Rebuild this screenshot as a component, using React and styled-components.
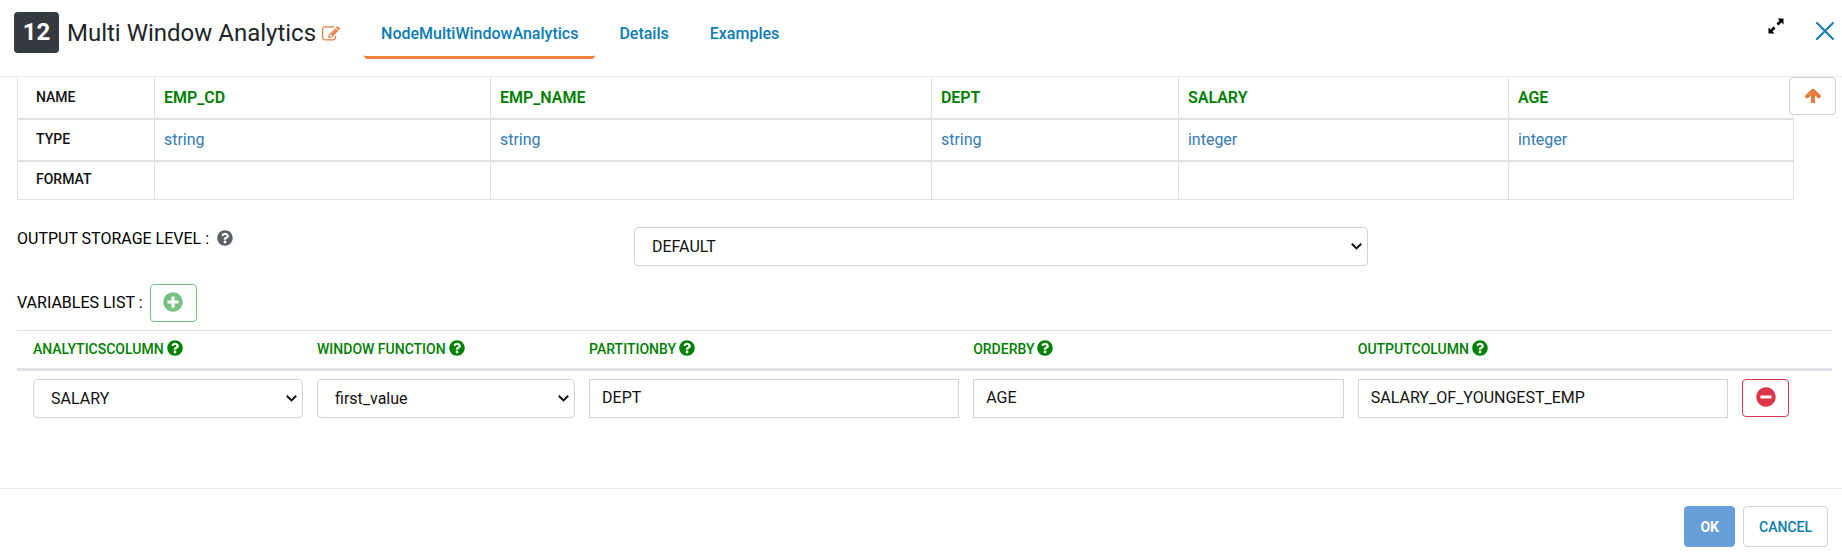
import React from "react";
import styled, { createGlobalStyle } from "styled-components";
import { FaQuestionCircle, FaPlusCircle, FaMinusCircle } from "react-icons/fa";

const GlobalStyle = createGlobalStyle`
  * { box-sizing: border-box; }
  body {
    margin: 0;
    background: #fff;
    color: #111;
    font-family: Roboto, "Liberation Sans", sans-serif;
    font-size: 16px;
    line-height: 24px;
  }
  button, input, select { font: inherit; color: inherit; }
`;

const Dialog = styled.main`
  display: flex;
  flex-direction: column;
  min-height: 100vh;
`;

const Header = styled.header`
  display: flex;
  align-items: flex-start;
  padding: 12px 8px 17px 14px;
  border-bottom: 1px solid #e9ecef;
`;

const Badge = styled.span`
  padding: 8px;
  width: 45px;
  border-radius: 4px;
  background: #343a40;
  color: #fff;
  font-size: 24px;
  font-weight: 700;
  line-height: 25px;
  text-align: center;
`;

const Title = styled.h1`
  margin: 5px 6px 0 8px;
  color: #212529;
  font-size: 24px;
  font-weight: 400;
  line-height: 32px;
  white-space: nowrap;
`;

const IconButton = styled.button`
  display: inline-flex;
  align-items: center;
  justify-content: center;
  margin-top: ${(p) => p.$top || 0}px;
  padding: 0;
  border: 0;
  background: none;
  color: ${(p) => p.$color};
  cursor: pointer;
`;

const Tabs = styled.nav`
  display: flex;
  gap: 7px;
  margin-left: 24px;
`;

const Tab = styled.a`
  padding: 10px 17px;
  border-bottom: 3px solid ${(p) => (p.$active ? "#f5803e" : "transparent")};
  border-radius: 4px;
  color: #0a7cb4;
  font-weight: 500;
  text-decoration: none;
`;

const WindowActions = styled.div`
  display: flex;
  gap: 32px;
  margin-left: auto;
`;

const Body = styled.div`
  position: relative;
  flex: 1;
  padding: 0 10px 0 17px;
`;

const SchemaTable = styled.table`
  width: calc(100% - 38px);
  border-collapse: collapse;
  table-layout: fixed;
`;

const SchemaRow = styled.tr`
  height: ${(p) => p.$height}px;
  & + & { border-top: 2px solid #dee2e6; }
`;

const cellBorder = "1px solid #dee2e6";

const RowHead = styled.th`
  padding: 0 18px 2px;
  border: ${cellBorder};
  border-top-width: inherit;
  font-size: 14px;
  font-weight: 500;
  text-align: left;
`;

const Cell = styled.td`
  padding: 0 9px;
  border: ${cellBorder};
  border-top-width: inherit;
  color: ${(p) => (p.$name ? "#008000" : "#337ab7")};
  font-weight: ${(p) => (p.$name ? 600 : 400)};
`;

const OutlineButton = styled.button`
  display: inline-flex;
  align-items: center;
  justify-content: center;
  width: 47px;
  height: 38px;
  padding: 0 0 2px;
  border: 1px solid ${(p) => p.$border || p.$color};
  border-radius: 4px;
  background: #fff;
  color: ${(p) => p.$color};
  cursor: pointer;
`;

const ScrollTop = styled(OutlineButton)`
  position: absolute;
  top: 0;
  right: 6px;
`;

const StorageRow = styled.div`
  display: grid;
  grid-template-columns: 617fr 734fr 464fr;
  margin-top: 27px;
`;

const FieldLabel = styled.label`
  display: flex;
  align-items: center;
  gap: 8px;
  height: 24px;
  color: #000;

  svg { margin-bottom: 2px; }
`;

const SelectBox = styled.div`
  display: grid;
  grid-template-areas: "field";
  align-items: center;

  > * { grid-area: field; }
  > svg {
    justify-self: end;
    margin-right: 6px;
    pointer-events: none;
  }
`;

const SelectField = styled.select`
  width: 100%;
  height: 39px;
  padding: 7px 24px 5px 17px;
  border: 1px solid #ced4da;
  border-radius: 4px;
  background: #fff;
  appearance: none;
`;

const TextInput = styled.input`
  display: block;
  width: 100%;
  height: 39px;
  padding: 4px 12px 6px;
  border: 1px solid #ced4da;
  border-radius: 0;
  background: #fff;
`;

const ListHeading = styled.div`
  display: flex;
  align-items: center;
  gap: 7px;
  margin-top: 18px;
  color: #000;
`;

const VariablesTable = styled.table`
  width: 100%;
  margin-top: 8px;
  border-collapse: separate;
  border-spacing: 0;
  border-top: 1px solid #dee2e6;
  table-layout: fixed;

  th, td { padding: 0 0 0 14px; text-align: left; vertical-align: top; }
  th:first-child, td:first-child { padding-left: 16px; }
  th { height: 40px; border-bottom: 3px solid #dee2e6; }
  td { padding-top: 8px; }
`;

const ColumnTitle = styled.span`
  display: flex;
  align-items: center;
  gap: 3px;
  padding-top: 6px;
  color: #008000;
  font-size: 14px;
  font-weight: 500;

  svg { margin-bottom: 2px; }
`;

const Footer = styled.footer`
  display: flex;
  justify-content: flex-end;
  gap: 8px;
  padding: 17px 14px 8px;
  border-top: 1px solid #e9ecef;
`;

const FooterButton = styled.button`
  height: 41px;
  padding: 0 15px;
  border: 1px solid ${(p) => (p.$primary ? "#689ed9" : "#ced4da")};
  border-radius: 4px;
  background: ${(p) => (p.$primary ? "#689ed9" : "#fff")};
  color: ${(p) => (p.$primary ? "#fff" : "#0a7cb4")};
  font-size: 14px;
  font-weight: ${(p) => (p.$primary ? 700 : 500)};
  cursor: pointer;
`;

const EditIcon = () => (
  <svg width="18" height="18" viewBox="0 0 1792 1792" fill="currentColor" aria-hidden="true">
    <path d="M888 1184l116-116-152-152-116 116v56h96v96h56zm440-720q-16-16-33 1l-350 350q-17 17-1 33t33-1l350-350q17-17 1-33zm80 594v190q0 119-84.5 203.5t-203.5 84.5h-832q-119 0-203.5-84.5t-84.5-203.5v-832q0-119 84.5-203.5t203.5-84.5h832q63 0 117 25 15 7 18 23 3 17-9 29l-49 49q-14 14-32 8-23-6-45-6h-832q-66 0-113 47t-47 113v832q0 66 47 113t113 47h832q66 0 113-47t47-113v-126q0-13 9-22l64-64q15-15 35-7t20 29zm-96-738l288 288-672 672h-288v-288zm444 132l-92 92-288-288 92-92q28-28 68-28t68 28l152 152q28 28 28 68t-28 68z" />
  </svg>
);

const ExpandIcon = () => (
  <svg width="16" height="16" viewBox="0 0 16 16" aria-hidden="true">
    <path d="M9.5 0.5H15.5V6.5L13.5 4.5L10.5 7.5L8.5 5.5L11.5 2.5ZM6.5 15.5H0.5V9.5L2.5 11.5L5.5 8.5L7.5 10.5L4.5 13.5Z" fill="currentColor" />
  </svg>
);

const CloseIcon = () => (
  <svg width="18" height="18" viewBox="0 0 18 18" aria-hidden="true">
    <path d="M1 1L17 17M17 1L1 17" stroke="currentColor" strokeWidth="2" strokeLinecap="round" />
  </svg>
);

const ArrowUpIcon = () => (
  <svg width="16" height="15" viewBox="0 0 16 15" fill="none" stroke="currentColor" strokeWidth="4" aria-hidden="true">
    <path d="M8 15V4" />
    <path d="M2.2 8.3L8 2.8L13.8 8.3" strokeLinecap="round" strokeLinejoin="round" />
  </svg>
);

const ChevronIcon = () => (
  <svg width="11" height="7" viewBox="0 0 11 7" fill="none" aria-hidden="true">
    <path d="M0.8 0.8L5.5 5.4L10.2 0.8" stroke="#111" strokeWidth="2" />
  </svg>
);

const Select = ({ value, ...rest }) => (
  <SelectBox>
    <SelectField defaultValue={value} {...rest}>
      <option>{value}</option>
    </SelectField>
    <ChevronIcon />
  </SelectBox>
);

const schema = [
  { name: "EMP_CD", type: "string" },
  { name: "EMP_NAME", type: "string" },
  { name: "DEPT", type: "string" },
  { name: "SALARY", type: "integer" },
  { name: "AGE", type: "integer" },
];
const schemaWidths = [7.71, 18.92, 24.83, 13.91, 18.58, 16.05];

const variableColumns = [
  { title: "ANALYTICSCOLUMN", width: 15.76 },
  { title: "WINDOW FUNCTION", width: 14.99 },
  { title: "PARTITIONBY", width: 21.16 },
  { title: "ORDERBY", width: 21.19 },
  { title: "OUTPUTCOLUMN", width: 21.19 },
];

const ColumnWidth = styled.col`
  width: ${(p) => p.$width}%;
`;

export default function App() {
  return (
    <>
      <GlobalStyle />
      <Dialog>
        <Header>
          <Badge>12</Badge>
          <Title>Multi Window Analytics</Title>
          <IconButton $color="#e67e42" $top={13} aria-label="Edit name"><EditIcon /></IconButton>
          <Tabs>
            <Tab href="#node" $active>NodeMultiWindowAnalytics</Tab>
            <Tab href="#details">Details</Tab>
            <Tab href="#examples">Examples</Tab>
          </Tabs>
          <WindowActions>
            <IconButton $color="#000" aria-label="Expand"><ExpandIcon /></IconButton>
            <IconButton $color="#0a7cb4" $top={10} aria-label="Close"><CloseIcon /></IconButton>
          </WindowActions>
        </Header>

        <Body>
          <SchemaTable>
            <colgroup>
              {schemaWidths.map((w) => <ColumnWidth key={w} $width={w} />)}
            </colgroup>
            <tbody>
              <SchemaRow $height={42}>
                <RowHead scope="row">NAME</RowHead>
                {schema.map((c) => <Cell key={c.name} $name>{c.name}</Cell>)}
              </SchemaRow>
              <SchemaRow $height={42}>
                <RowHead scope="row">TYPE</RowHead>
                {schema.map((c) => <Cell key={c.name}>{c.type}</Cell>)}
              </SchemaRow>
              <SchemaRow $height={38}>
                <RowHead scope="row">FORMAT</RowHead>
                {schema.map((c) => <Cell key={c.name} />)}
              </SchemaRow>
            </tbody>
          </SchemaTable>
          <ScrollTop $color="#e67e42" $border="#ced4da" aria-label="Scroll to top">
            <ArrowUpIcon />
          </ScrollTop>

          <StorageRow>
            <FieldLabel htmlFor="storage">
              OUTPUT STORAGE LEVEL : <FaQuestionCircle size={16} color="#5a6169" />
            </FieldLabel>
            <Select id="storage" value="DEFAULT" />
          </StorageRow>

          <ListHeading>
            <span>VARIABLES LIST :</span>
            <OutlineButton $color="#77c280" aria-label="Add variable"><FaPlusCircle size={20} /></OutlineButton>
          </ListHeading>

          <VariablesTable>
            <colgroup>
              {variableColumns.map((c) => <ColumnWidth key={c.title} $width={c.width} />)}
              <col />
            </colgroup>
            <thead>
              <tr>
                {variableColumns.map((c) => (
                  <th key={c.title} scope="col">
                    <ColumnTitle>{c.title} <FaQuestionCircle size={16} /></ColumnTitle>
                  </th>
                ))}
                <th aria-label="Actions" />
              </tr>
            </thead>
            <tbody>
              <tr>
                <td><Select aria-label="Analytics column" value="SALARY" /></td>
                <td><Select aria-label="Window function" value="first_value" /></td>
                <td><TextInput aria-label="Partition by" defaultValue="DEPT" /></td>
                <td><TextInput aria-label="Order by" defaultValue="AGE" /></td>
                <td><TextInput aria-label="Output column" defaultValue="SALARY_OF_YOUNGEST_EMP" /></td>
                <td><OutlineButton $color="#dc3545" aria-label="Remove variable"><FaMinusCircle size={20} /></OutlineButton></td>
              </tr>
            </tbody>
          </VariablesTable>
        </Body>

        <Footer>
          <FooterButton $primary>OK</FooterButton>
          <FooterButton>CANCEL</FooterButton>
        </Footer>
      </Dialog>
    </>
  );
}
